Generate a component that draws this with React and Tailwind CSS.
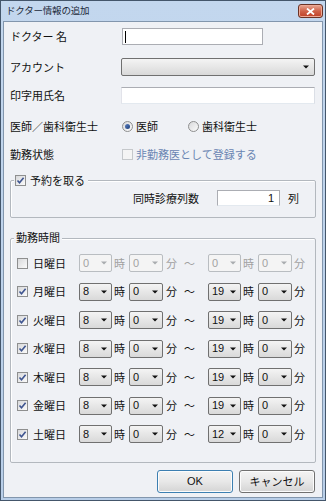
import React from 'react';

const Arrow = ({ disabled }) => (
  <svg width="6" height="4" viewBox="0 0 6 4" className="shrink-0">
    <path d="M0 0.5h6L3 3.5z" fill={disabled ? '#a9acaf' : '#111'} />
  </svg>
);

const Check = ({ checked, disabled }) => (
  <span
    className={`flex items-center justify-center w-[11px] h-[11px] shrink-0 border ${
      disabled ? 'border-[#c5c8cb] bg-[#f4f4f4]' : 'border-[#8e8f8f] bg-gradient-to-br from-[#d8d9db] to-[#fbfbfb]'
    }`}
  >
    {checked && (
      <svg width="9" height="9" viewBox="0 0 9 9">
        <path d="M1.5 4.5l2 2.2L7.6 1.8" stroke="#3f5590" strokeWidth="1.6" fill="none" />
      </svg>
    )}
  </span>
);

const Radio = ({ checked }) => (
  <span className="flex items-center justify-center w-[11px] h-[11px] shrink-0 rounded-full border border-[#8e8f8f] bg-gradient-to-br from-[#d8d9db] to-[#fbfbfb]">
    {checked && <span className="w-[5px] h-[5px] rounded-full bg-gradient-to-br from-[#5b7fc0] to-[#1d3f7a]" />}
  </span>
);

const Drop = ({ value, w, disabled }) => (
  <div
    className={`flex items-center h-[18px] ${w} shrink-0 rounded-[2px] border pl-[3px] pr-[4px] ${
      disabled
        ? 'border-[#b9bdc1] bg-[#f4f4f4] text-[#a3a3a3]'
        : 'border-[#707070] bg-gradient-to-b from-[#f4f4f4] to-[#d9d9d9] text-[#111]'
    }`}
  >
    <span className="font-['Liberation_Sans',sans-serif] text-[11px] leading-none">{value}</span>
    <span className="ml-auto">
      <Arrow disabled={disabled} />
    </span>
  </div>
);

const days = [
  { name: '日曜日', on: false, from: '0', to: '0' },
  { name: '月曜日', on: true, from: '8', to: '19' },
  { name: '火曜日', on: true, from: '8', to: '19' },
  { name: '水曜日', on: true, from: '8', to: '19' },
  { name: '木曜日', on: true, from: '8', to: '19' },
  { name: '金曜日', on: true, from: '8', to: '19' },
  { name: '土曜日', on: true, from: '8', to: '12' },
];

const DayRow = ({ d }) => {
  const dis = !d.on;
  const unit = dis ? 'text-[#a0a0a0]' : 'text-[#111]';
  return (
    <div className="flex items-center h-[18px]">
      <Check checked={d.on} />
      <span className="ml-[5px] w-[46px]">{d.name}</span>
      <Drop value={d.from} w="w-[33px]" disabled={dis} />
      <span className={`w-[17px] pl-[2px] ${unit}`}>時</span>
      <Drop value="0" w="w-[34px]" disabled={dis} />
      <span className={`w-[17px] pl-[3px] ${unit}`}>分</span>
      <span className={`w-[28px] pl-[4px] ${unit}`}>〜</span>
      <Drop value={d.to} w="w-[33px]" disabled={dis} />
      <span className={`w-[17px] pl-[2px] ${unit}`}>時</span>
      <Drop value="0" w="w-[34px]" disabled={dis} />
      <span className={`pl-[2px] ${unit}`}>分</span>
    </div>
  );
};

const Button = ({ children, primary }) => (
  <div
    className={`flex items-center justify-center h-[23px] w-[76px] rounded-[3px] border bg-gradient-to-b from-[#f3f3f3] via-[#e8e8e8] to-[#d4d4d4] shadow-[inset_0_0_0_1px_#fcfcfc] ${
      primary ? 'border-[#3c7fb1]' : 'border-[#707070]'
    }`}
  >
    {children}
  </div>
);

export default function App() {
  return (
    <div className="w-[326px] h-[501px] flex flex-col border border-[#44566b] bg-gradient-to-b from-[#c3d7ee] to-[#b8cee8] px-[2px] pb-[2px] font-['Noto_Sans_CJK_JP','Noto_Sans',sans-serif] text-[11px] leading-none text-[#111]">
      {/* title bar */}
      <div className="flex h-[20px] shrink-0">
        <span className="pl-[3px] pt-[5px] text-[9.5px] tracking-[-0.2px] text-[#1c2a3a]">ドクター情報の追加</span>
        <div className="ml-auto mt-[3px] flex items-center justify-center w-[25px] h-[14px] rounded-[3px] border border-[#6b3326] bg-gradient-to-b from-[#e7a996] via-[#d0634a] to-[#bf3f25] shadow-[inset_0_0_0_1px_#eea995]">
          <svg width="9" height="7" viewBox="0 0 9 7">
            <path d="M1 0.5l7 6M8 0.5l-7 6" stroke="#fff" strokeWidth="1.8" />
          </svg>
        </div>
      </div>

      {/* client */}
      <div className="flex-1 flex flex-col border border-[#8296ad] bg-[#eff1f5] px-[6px]">
        <div className="mt-[6px] flex items-center h-[17px]">
          <span className="w-[112px]">ドクター 名</span>
          <div className="flex items-center h-[17px] w-[141px] border border-[#abadb3] bg-white pl-[2px]">
            <span className="w-px h-[12px] bg-black" />
          </div>
        </div>

        <div className="mt-[13px] flex items-center h-[18px]">
          <span className="w-[111px]">アカウント</span>
          <div className="flex items-center h-[18px] flex-1 mr-[1px] rounded-[2px] border border-[#707070] bg-gradient-to-b from-[#f4f4f4] to-[#d9d9d9] pr-[5px]">
            <span className="ml-auto">
              <Arrow />
            </span>
          </div>
        </div>

        <div className="mt-[11px] flex items-center h-[17px]">
          <span className="w-[111px]">印字用氏名</span>
          <div className="h-[17px] flex-1 mr-[1px] border border-[#abadb3] border-l-[#e2e3ea] border-r-[#dbdfe6] border-b-[#e3e9ef] bg-white" />
        </div>

        <div className="mt-[14px] flex items-center h-[16px]">
          <span className="w-[112px]">医師／歯科衛生士</span>
          <Radio checked />
          <span className="ml-[3px] w-[52px]">医師</span>
          <Radio />
          <span className="ml-[3px]">歯科衛生士</span>
        </div>

        <div className="mt-[12px] flex items-center h-[16px]">
          <span className="w-[112px]">勤務状態</span>
          <Check disabled />
          <span className="ml-[3px] text-[#6a85b2]">非勤務医として登録する</span>
        </div>

        {/* group 1 */}
        <div className="relative mt-[18px] h-[38px] border border-[#b3b8be] rounded-[2px] shadow-[inset_1px_1px_0_#fff]">
          <div className="absolute left-[3px] top-[-6px] flex items-center gap-[4px] bg-[#eff1f5] pr-[3px] pl-[1px]">
            <Check checked />
            <span>予約を取る</span>
          </div>
          <div className="flex items-center pl-[122px] pt-[9px]">
            <span className="w-[84px]">同時診療列数</span>
            <div className="flex items-center justify-end h-[16px] w-[63px] border border-[#abadb3] border-b-[#e3e9ef] bg-white pr-[5px] font-['Liberation_Sans',sans-serif]">
              1
            </div>
            <span className="ml-[8px]">列</span>
          </div>
        </div>

        {/* group 2 */}
        <div className="relative mt-[20px] h-[225px] border border-[#b3b8be] rounded-[2px] shadow-[inset_1px_1px_0_#fff]">
          <div className="absolute left-[3px] top-[-7px] bg-[#eff1f5] px-[2px]">勤務時間</div>
          <div className="flex flex-col gap-y-[10.5px] pl-[6px] pt-[15px]">
            {days.map((d) => (
              <DayRow key={d.name} d={d} />
            ))}
          </div>
        </div>

        <div className="mt-[7px] flex justify-end gap-[6px] pr-[1px]">
          <Button primary>
            <span className="font-['Liberation_Sans',sans-serif]">OK</span>
          </Button>
          <Button>キャンセル</Button>
        </div>
      </div>
    </div>
  );
}
